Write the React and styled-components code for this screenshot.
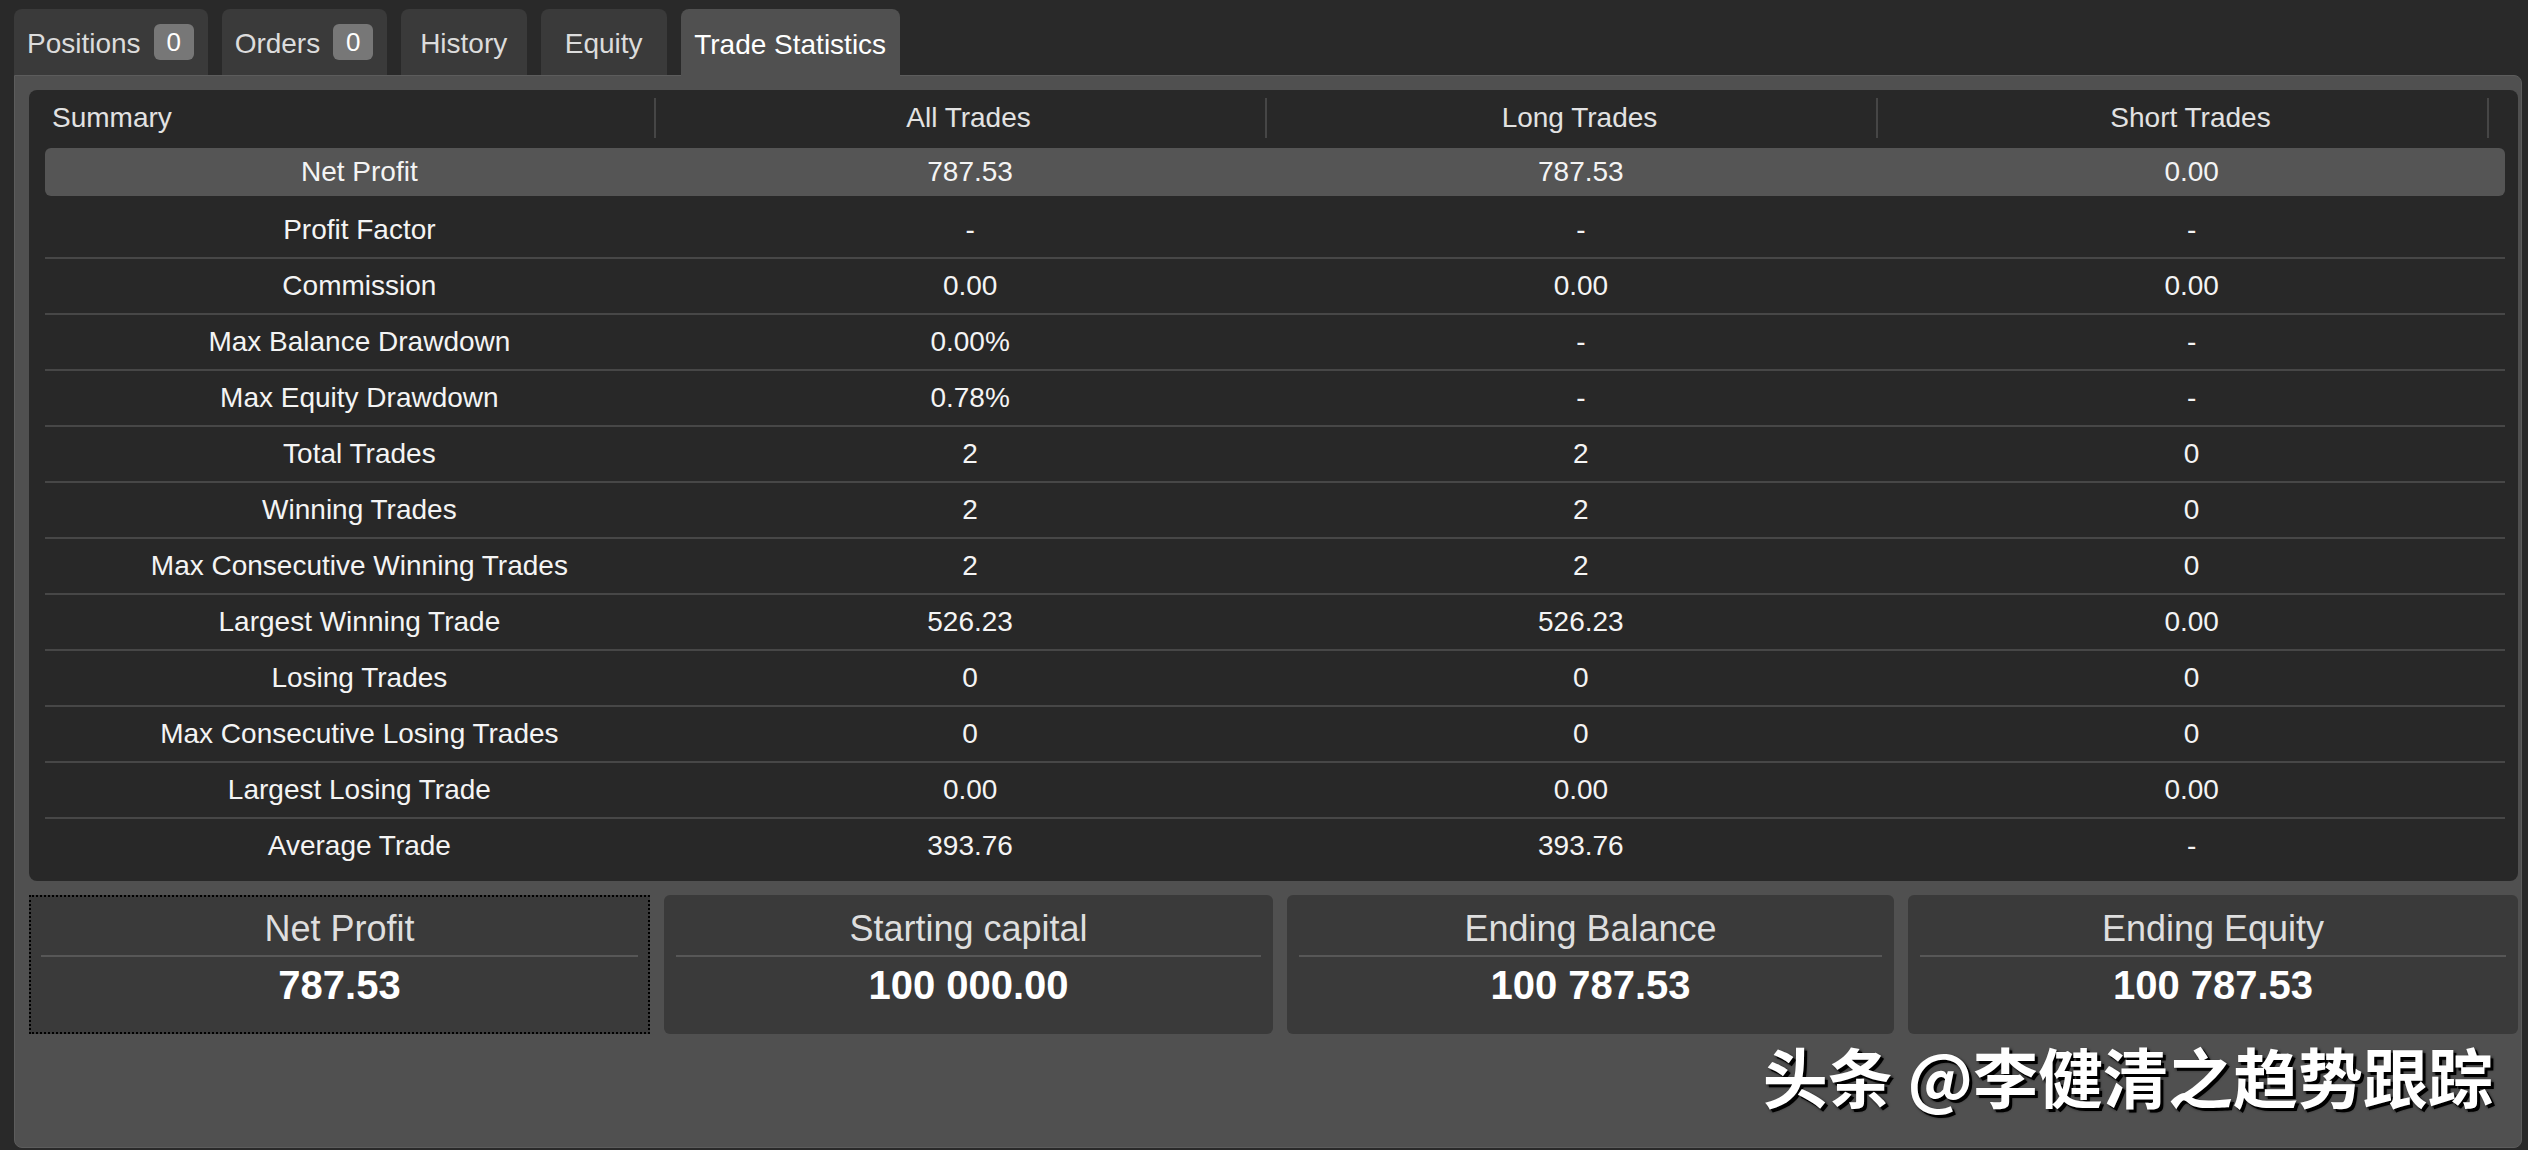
import React from 'react';
import styled, { createGlobalStyle } from 'styled-components';

const GlobalStyle = createGlobalStyle`
  html, body {
    margin: 0;
    padding: 0;
    background: #292929;
  }
  body {
    font-family: "Liberation Sans", Arial, sans-serif;
  }
`

const Page = styled.div`
  height: 100vh;
  box-sizing: border-box;
  display: flex;
  flex-direction: column;
  padding: 9px 6px 2px 14px;
`

const TabBar = styled.div`
  display: flex;
  gap: 14px;
  height: 66px;
`

const Tab = styled.div`
  display: flex;
  align-items: center;
  justify-content: center;
  min-width: 126px;
  box-sizing: border-box;
  padding: 4px 14px 0 13px;
  border-radius: 8px 8px 0 0;
  background: ${p => (p.$active ? '#505050' : '#3a3a3a')};
  color: ${p => (p.$active ? '#ffffff' : '#dcdcdc')};
  font-size: 28px;
  position: relative;
  z-index: 1;
  margin-bottom: ${p => (p.$active ? '-1px' : '0')};
  height: ${p => (p.$active ? '67px' : '66px')};
`

const Badge = styled.span`
  margin-left: 13px;
  width: 40px;
  height: 36px;
  border-radius: 6px;
  background: #777777;
  color: #ffffff;
  font-size: 26px;
  display: flex;
  align-items: center;
  justify-content: center;
  margin-top: -4px;
`

const Panel = styled.div`
  flex: 1;
  position: relative;
  background: #505050;
  border: 1px solid #5c5c5c;
  border-radius: 0 8px 8px 8px;
  padding: 14px 3px 0 14px;
`

const StatsCard = styled.div`
  background: #282828;
  border-radius: 8px;
  padding: 0 13px 8px 16px;
`

const HeaderRow = styled.div`
  display: grid;
  grid-template-columns: repeat(4, 1fr);
  height: 56px;
  margin-right: 16px;
`

const HeaderCell = styled.div`
  position: relative;
  display: flex;
  align-items: center;
  justify-content: ${p => (p.$left ? 'flex-start' : 'center')};
  padding-left: ${p => (p.$left ? '7px' : '14px')};
  color: #e2e2e2;
  font-size: 28px;

  &::after {
    content: '';
    position: absolute;
    right: 0;
    top: 8px;
    width: 2px;
    height: 40px;
    background: #464646;
  }
`

const Row = styled.div`
  display: grid;
  grid-template-columns: repeat(4, 1fr);
  align-items: center;
  padding: 0 8px 0 9px;
  height: ${p => (p.$selected ? '48px' : '54px')};
  margin: ${p => (p.$selected ? '2px 0 7px' : '0')};
  background: ${p => (p.$selected ? '#555555' : 'transparent')};
  border-radius: ${p => (p.$selected ? '6px' : '0')};
  border-bottom: ${p => (p.$divided ? '2px solid #474747' : 'none')};
  color: #f4f4f4;
  font-size: 28px;
`

const Cell = styled.div`
  text-align: center;
`

const SummaryGrid = styled.div`
  display: grid;
  grid-template-columns: 621fr 609fr 607fr 610fr;
  gap: 14px;
  margin-top: 14px;
`

const SummaryCard = styled.div`
  height: 139px;
  box-sizing: border-box;
  padding: 10px 10px 0;
  background: #3a3a3a;
  border: 2px ${p => (p.$focused ? 'dotted #000000' : 'solid transparent')};
  border-radius: ${p => (p.$focused ? '0' : '6px')};
`

const SummaryTitle = styled.div`
  text-align: center;
  font-size: 36px;
  line-height: 44px;
  color: #dedede;
`

const SummaryRule = styled.div`
  height: 2px;
  margin-top: 4px;
  background: #575757;
`

const SummaryValue = styled.div`
  margin-top: 3px;
  text-align: center;
  font-size: 40px;
  line-height: 50px;
  font-weight: bold;
  color: #ffffff;
`

const Watermark = styled.div`
  position: absolute;
  right: 28px;
  bottom: 39px;
  font-family: "Noto Sans CJK SC", "Noto Sans", sans-serif;
  font-size: 65px;
  line-height: 65px;
  font-weight: bold;
  color: #ffffff;
  text-shadow: 3px 3px 0 #000, 2px 2px 3px #000;
  white-space: nowrap;
`

const tabs = [
  { label: 'Positions', badge: '0' },
  { label: 'Orders', badge: '0' },
  { label: 'History' },
  { label: 'Equity' },
  { label: 'Trade Statistics', active: true },
]

const stats = [
  ['Net Profit', '787.53', '787.53', '0.00'],
  ['Profit Factor', '-', '-', '-'],
  ['Commission', '0.00', '0.00', '0.00'],
  ['Max Balance Drawdown', '0.00%', '-', '-'],
  ['Max Equity Drawdown', '0.78%', '-', '-'],
  ['Total Trades', '2', '2', '0'],
  ['Winning Trades', '2', '2', '0'],
  ['Max Consecutive Winning Trades', '2', '2', '0'],
  ['Largest Winning Trade', '526.23', '526.23', '0.00'],
  ['Losing Trades', '0', '0', '0'],
  ['Max Consecutive Losing Trades', '0', '0', '0'],
  ['Largest Losing Trade', '0.00', '0.00', '0.00'],
  ['Average Trade', '393.76', '393.76', '-'],
]

const totals = [
  ['Net Profit', '787.53'],
  ['Starting capital', '100 000.00'],
  ['Ending Balance', '100 787.53'],
  ['Ending Equity', '100 787.53'],
]

export default function App() {
  return (
    <>
      <GlobalStyle />
      <Page>
        <TabBar>
          {tabs.map(t => (
            <Tab key={t.label} $active={t.active}>
              {t.label}
              {t.badge && <Badge>{t.badge}</Badge>}
            </Tab>
          ))}
        </TabBar>
        <Panel>
          <StatsCard>
            <HeaderRow>
              <HeaderCell $left>Summary</HeaderCell>
              <HeaderCell>All Trades</HeaderCell>
              <HeaderCell>Long Trades</HeaderCell>
              <HeaderCell>Short Trades</HeaderCell>
            </HeaderRow>
            {stats.map((row, i) => (
              <Row
                key={row[0]}
                $selected={i === 0}
                $divided={i > 0 && i < stats.length - 1}
              >
                {row.map((v, j) => (
                  <Cell key={j}>{v}</Cell>
                ))}
              </Row>
            ))}
          </StatsCard>
          <SummaryGrid>
            {totals.map(([title, value], i) => (
              <SummaryCard key={title} $focused={i === 0}>
                <SummaryTitle>{title}</SummaryTitle>
                <SummaryRule />
                <SummaryValue>{value}</SummaryValue>
              </SummaryCard>
            ))}
          </SummaryGrid>
          <Watermark>头条 @李健清之趋势跟踪</Watermark>
        </Panel>
      </Page>
    </>
  );
}
